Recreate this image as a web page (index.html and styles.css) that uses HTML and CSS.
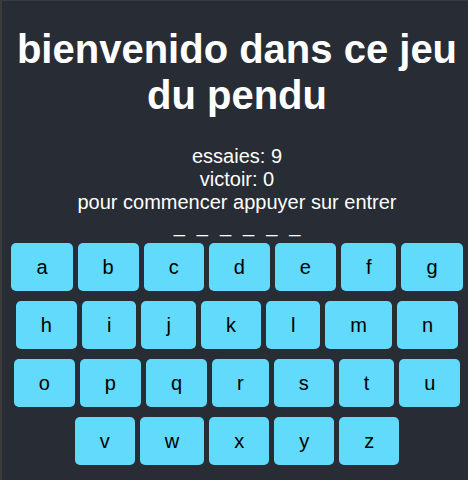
FILE: index.html
```html
<!DOCTYPE html>
<html lang="fr">
<head>
<meta charset="utf-8">
<title>pendu</title>
<link rel="stylesheet" href="styles.css">
</head>
<body>
<div class="app">
  <h1 class="title">bienvenido dans ce jeu du pendu</h1>
  <div class="stats">
    <div>essaies: 9</div>
    <div>victoir: 0</div>
    <div>pour commencer appuyer sur entrer</div>
  </div>
  <div class="word">
    <span class="slot">_</span><span class="slot">_</span><span class="slot">_</span><span class="slot">_</span><span class="slot">_</span><span class="slot">_</span>
  </div>
  <div class="keyboard">
    <div class="row">
      <button class="key">a</button><button class="key">b</button><button class="key">c</button><button class="key">d</button><button class="key">e</button><button class="key">f</button><button class="key">g</button>
    </div>
    <div class="row">
      <button class="key">h</button><button class="key">i</button><button class="key">j</button><button class="key">k</button><button class="key">l</button><button class="key">m</button><button class="key">n</button>
    </div>
    <div class="row">
      <button class="key">o</button><button class="key">p</button><button class="key">q</button><button class="key">r</button><button class="key">s</button><button class="key">t</button><button class="key">u</button>
    </div>
    <div class="row">
      <button class="key">v</button><button class="key">w</button><button class="key">x</button><button class="key">y</button><button class="key">z</button>
    </div>
  </div>
</div>
</body>
</html>
```
FILE: styles.css
```css
html, body {
  margin: 0;
  padding: 0;
  height: 100%;
}
body {
  background: #282c34;
  border-top: 1px solid #3a3b3d;
  border-left: 2px solid #3a3b3d;
  box-sizing: border-box;
  font-family: "Liberation Sans", Arial, sans-serif;
  color: #ffffff;
  overflow: hidden;
}
.app {
  text-align: center;
  padding-left: 4px;
}
.title {
  font-size: 40px;
  font-weight: bold;
  margin: 25px 8px 27px;
  line-height: 46px;
}
.stats {
  font-size: 20px;
  line-height: 23px;
}
.word {
  font-size: 20px;
  line-height: 23px;
  display: flex;
  justify-content: center;
  gap: 12px;
}
.keyboard {
  display: flex;
  flex-direction: column;
  gap: 10px;
  margin-top: 6px;
}
.row {
  display: flex;
  justify-content: center;
  gap: 5px;
}
.key {
  font-family: "Liberation Sans", Arial, sans-serif;
  font-size: 20px;
  line-height: 23px;
  padding: 12.5px 25px;
  border: none;
  border-radius: 5px;
  background: #61dafb;
  color: #000000;
  margin: 0;
}
```
